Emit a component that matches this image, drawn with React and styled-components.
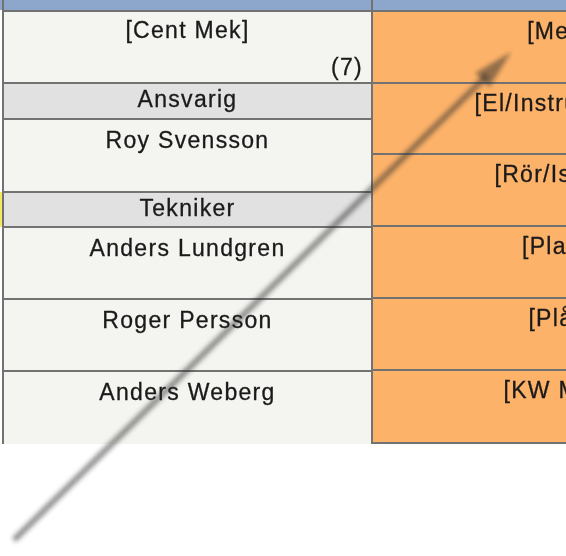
import React from "react";
import styled, { createGlobalStyle } from "styled-components";

const GlobalStyle = createGlobalStyle`
  html, body {
    margin: 0;
    padding: 0;
    overflow: hidden;
    background: #ffffff;
  }
  body {
    font-family: "Liberation Sans", Arial, sans-serif;
  }
`;

const LINE = "#727272";

const Page = styled.div`
  position: relative;
  width: 566px;
  height: 556px;
  overflow: hidden;
  background: #ffffff;
`;

const Table = styled.div`
  display: flex;
  align-items: flex-start;
  width: max-content;
  padding-left: 2px;
  background: linear-gradient(#8ca6cc, #8ca6cc) top left / 2px 10px no-repeat;
  filter: blur(0.55px);
`;

const Column = styled.div`
  display: flex;
  flex-direction: column;
  width: ${(p) => p.$width}px;
  border-left: 2px solid ${LINE};
`;

const HeaderCell = styled.div`
  height: 10px;
  background: #8ca6cc;
  border-bottom: 2px solid ${LINE};
`;

const Cell = styled.div`
  position: relative;
  display: flex;
  flex-direction: column;
  box-sizing: border-box;
  height: ${(p) => p.$height}px;
  padding: ${(p) => p.$padTop}px 8px 3px;
  background: ${(p) => p.$bg};
  border-bottom: ${(p) => (p.$last && !p.$closed ? "none" : `2px solid ${LINE}`)};
  color: #1a1a1a;
  font-size: 23px;
  line-height: 24px;
  letter-spacing: 1.3px;
  -webkit-text-stroke: 0.3px #1a1a1a;
  text-align: center;
  white-space: nowrap;

  ${(p) =>
    p.$mark &&
    `
    &::before {
      content: "";
      position: absolute;
      left: -4px;
      top: -1px;
      bottom: -1px;
      width: 2px;
      background: #f2ea63;
    }
  `}
`;

const Label = styled.div``;

const Count = styled.div`
  margin-top: auto;
  text-align: right;
`;

const ArrowLayer = styled.svg`
  position: absolute;
  inset: 0;
  pointer-events: none;
`;

const leftRows = [
  { label: "[Cent Mek]", count: "(7)", kind: "unit" },
  { label: "Ansvarig", kind: "group" },
  { label: "Roy Svensson", kind: "person", height: 73 },
  { label: "Tekniker", kind: "group", height: 35, mark: true },
  { label: "Anders Lundgren", kind: "person" },
  { label: "Roger Persson", kind: "person" },
  { label: "Anders Weberg", kind: "person", last: true },
];

const rightRows = [
  { label: "[Mek]", height: 72 },
  { label: "[El/Instrument]", height: 71 },
  { label: "[Rör/Isoler]", height: 72 },
  { label: "[Plast]", height: 72 },
  { label: "[Plåt]", height: 72 },
  { label: "[KW Mek]", height: 73 },
];

const Arrow = () => {
  const tip = [511, 52];
  const start = [16, 538];
  const dx = tip[0] - start[0];
  const dy = tip[1] - start[1];
  const len = Math.hypot(dx, dy);
  const ux = dx / len;
  const uy = dy / len;
  const nx = -uy;
  const ny = ux;
  const headLen = 40;
  const half = 10;
  const bx = tip[0] - ux * headLen;
  const by = tip[1] - uy * headLen;
  const p1 = `${bx + nx * half},${by + ny * half}`;
  const p2 = `${bx - nx * half},${by - ny * half}`;
  return (
    <ArrowLayer width="566" height="556" viewBox="0 0 566 556">
      <defs>
        <filter id="soft" x="-10%" y="-10%" width="120%" height="120%">
          <feGaussianBlur stdDeviation="2" />
        </filter>
      </defs>
      <g filter="url(#soft)" fill="rgba(40,40,40,0.5)" stroke="none">
        <line
          x1={start[0]}
          y1={start[1]}
          x2={bx + ux * 4}
          y2={by + uy * 4}
          stroke="rgba(40,40,40,0.48)"
          strokeWidth="6.5"
          strokeLinecap="round"
        />
        <polygon points={`${tip[0]},${tip[1]} ${p1} ${p2}`} />
      </g>
    </ArrowLayer>
  );
};

export default function App() {
  return (
    <>
      <GlobalStyle />
      <Page>
        <Table>
          <Column $width={367}>
            <HeaderCell />
            {leftRows.map((r, i) => {
              const isGroup = r.kind === "group";
              return (
                <Cell
                  key={i}
                  $height={r.height ?? (isGroup ? 36 : 72)}
                  $padTop={isGroup ? 3 : r.kind === "unit" ? 6 : 8}
                  $bg={isGroup ? "#e1e1e1" : "#f4f4f0"}
                  $last={r.last}
                  $mark={r.mark}
                >
                  <Label>{r.label}</Label>
                  {r.count && <Count>{r.count}</Count>}
                </Cell>
              );
            })}
          </Column>
          <Column $width={371}>
            <HeaderCell />
            {rightRows.map((r, i) => (
              <Cell
                key={i}
                $height={r.height}
                $padTop={7}
                $bg="#fdb269"
                $last={i === rightRows.length - 1}
                $closed
              >
                <Label>{r.label}</Label>
              </Cell>
            ))}
          </Column>
        </Table>
        <Arrow />
      </Page>
    </>
  );
}
